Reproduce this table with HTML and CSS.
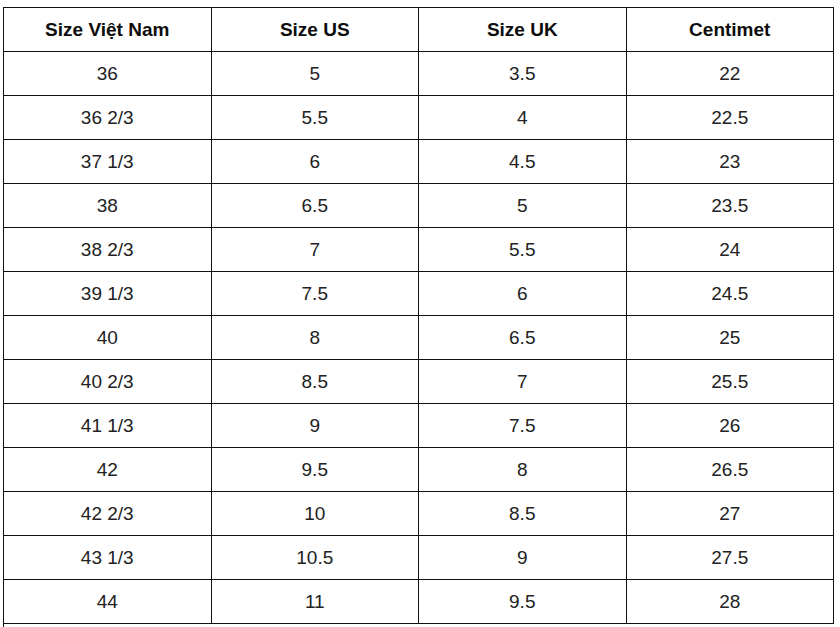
FILE: index.html
```html
<!DOCTYPE html>
<html lang="vi">
<head>
<meta charset="utf-8">
<title>Bảng size giày</title>
<link rel="stylesheet" href="styles.css">
</head>
<body>
<div class="wrap">
<table class="sizes">
<thead>
<tr><th>Size Việt Nam</th><th>Size US</th><th>Size UK</th><th>Centimet</th></tr>
</thead>
<tbody>
<tr><td>36</td><td>5</td><td>3.5</td><td>22</td></tr>
<tr><td>36 2/3</td><td>5.5</td><td>4</td><td>22.5</td></tr>
<tr><td>37 1/3</td><td>6</td><td>4.5</td><td>23</td></tr>
<tr><td>38</td><td>6.5</td><td>5</td><td>23.5</td></tr>
<tr><td>38 2/3</td><td>7</td><td>5.5</td><td>24</td></tr>
<tr><td>39 1/3</td><td>7.5</td><td>6</td><td>24.5</td></tr>
<tr><td>40</td><td>8</td><td>6.5</td><td>25</td></tr>
<tr><td>40 2/3</td><td>8.5</td><td>7</td><td>25.5</td></tr>
<tr><td>41 1/3</td><td>9</td><td>7.5</td><td>26</td></tr>
<tr><td>42</td><td>9.5</td><td>8</td><td>26.5</td></tr>
<tr><td>42 2/3</td><td>10</td><td>8.5</td><td>27</td></tr>
<tr><td>43 1/3</td><td>10.5</td><td>9</td><td>27.5</td></tr>
<tr><td>44</td><td>11</td><td>9.5</td><td>28</td></tr>
</tbody>
</table>
<div class="after"></div>
</div>
</body>
</html>
```
FILE: styles.css
```css
html, body {
  margin: 0;
  padding: 0;
  background: #ffffff;
}
body {
  font-family: "Liberation Sans", Arial, sans-serif;
  overflow: hidden;
}
.wrap {
  padding: 7px 0 0 3px;
}
.sizes {
  border-collapse: collapse;
  table-layout: fixed;
  width: 831px;
}
.sizes th,
.sizes td {
  border: 1px solid #111111;
  height: 43px;
  padding: 0;
  text-align: center;
  vertical-align: middle;
  font-size: 19px;
  line-height: 22px;
}
.sizes th {
  font-weight: bold;
  color: #0d0d0d;
}
.sizes td {
  font-weight: normal;
  color: #222222;
}
.after {
  height: 4px;
  border-left: 1px solid #111111;
}
```
